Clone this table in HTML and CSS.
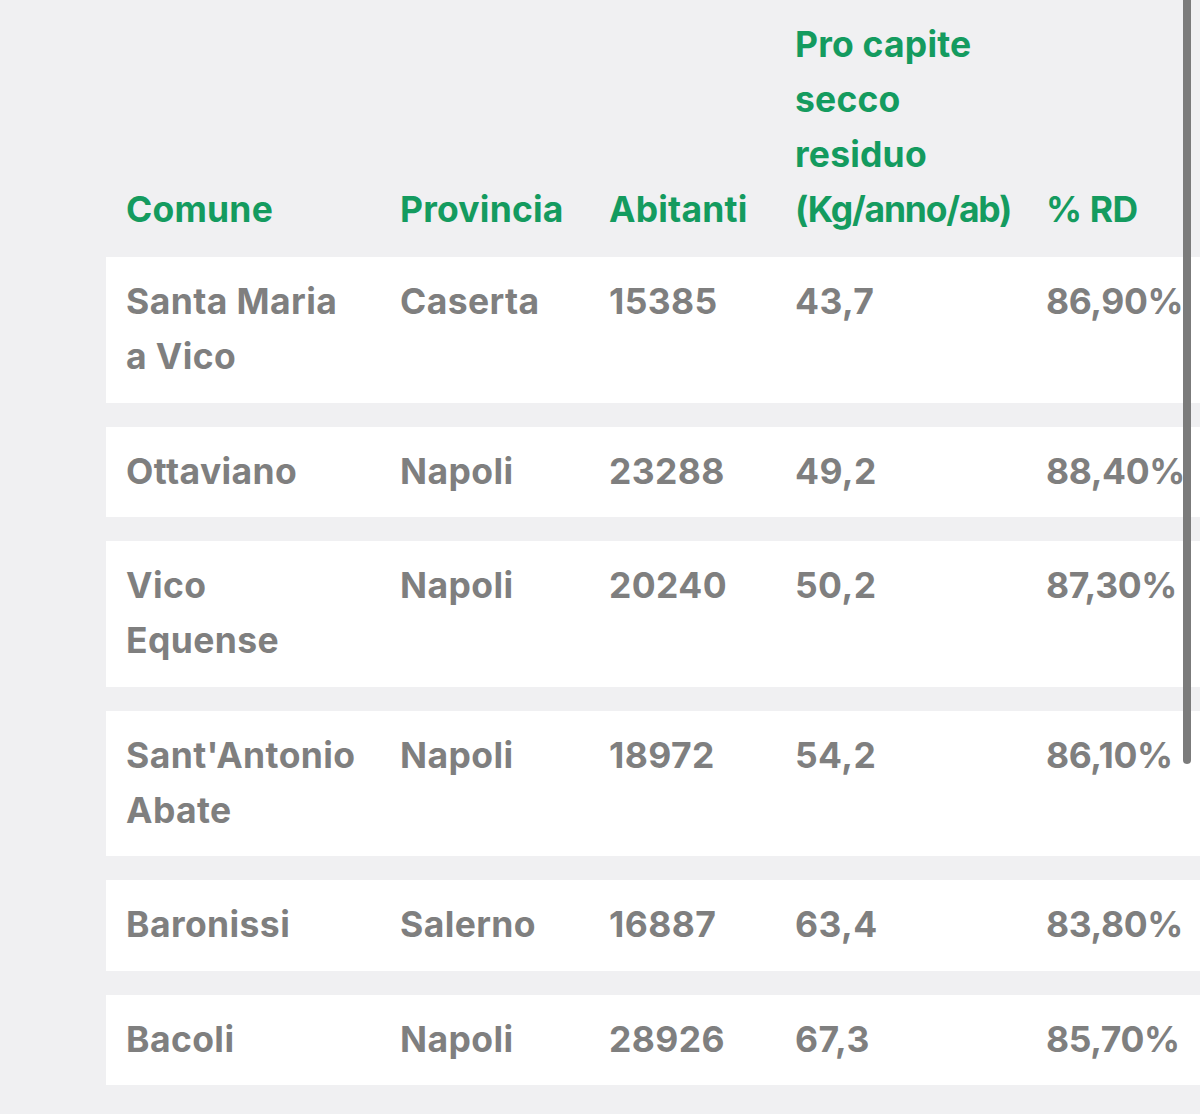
FILE: index.html
```html
<!DOCTYPE html>
<html lang="it">
<head>
<meta charset="utf-8">
<title>Comuni ricicloni</title>
<link rel="stylesheet" href="styles.css">
</head>
<body>
<div class="table">
  <div class="row head">
    <div class="cell">Comune</div>
    <div class="cell">Provincia</div>
    <div class="cell">Abitanti</div>
    <div class="cell">Pro capite<br>secco<br>residuo<br><span class="unit">(Kg/anno/ab)</span></div>
    <div class="cell">% RD</div>
  </div>
  <div class="rows">
    <div class="row">
      <div class="cell">Santa Maria<br>a Vico</div>
      <div class="cell">Caserta</div>
      <div class="cell">15385</div>
      <div class="cell">43,7</div>
      <div class="cell">86,90%</div>
    </div>
    <div class="row">
      <div class="cell">Ottaviano</div>
      <div class="cell">Napoli</div>
      <div class="cell">23288</div>
      <div class="cell">49,2</div>
      <div class="cell">88,40%</div>
    </div>
    <div class="row">
      <div class="cell">Vico<br>Equense</div>
      <div class="cell">Napoli</div>
      <div class="cell">20240</div>
      <div class="cell">50,2</div>
      <div class="cell">87,30%</div>
    </div>
    <div class="row">
      <div class="cell">Sant'Antonio<br>Abate</div>
      <div class="cell">Napoli</div>
      <div class="cell">18972</div>
      <div class="cell">54,2</div>
      <div class="cell">86,10%</div>
    </div>
    <div class="row">
      <div class="cell">Baronissi</div>
      <div class="cell">Salerno</div>
      <div class="cell">16887</div>
      <div class="cell">63,4</div>
      <div class="cell">83,80%</div>
    </div>
    <div class="row">
      <div class="cell">Bacoli</div>
      <div class="cell">Napoli</div>
      <div class="cell">28926</div>
      <div class="cell">67,3</div>
      <div class="cell">85,70%</div>
    </div>
  </div>
</div>
<div class="scrollbar"></div>
</body>
</html>
```

FILE: styles.css
```css
html, body {
  margin: 0;
  padding: 0;
  overflow: hidden;
}

body {
  background: #f0f0f2;
  font-family: "Inter", "Noto Sans", "Liberation Sans", sans-serif;
  font-weight: 700;
  font-size: 35.5px;
  line-height: 55px;
  letter-spacing: 0.4px;
  color: #7f7f7f;
  width: 1200px;
  height: 1114px;
  position: relative;
}

.table {
  margin-left: 106px;
  width: 1140px;
  display: flex;
  flex-direction: column;
}

.row {
  display: grid;
  grid-template-columns: 274px 209px 186px 251px 220px;
  background: #ffffff;
  padding: 17px 0 18.5px;
  align-items: start;
}

.row.head {
  background: transparent;
  color: #149b5f;
  padding: 17px 0 20px;
  align-items: end;
  letter-spacing: 0.2px;
}

.unit {
  letter-spacing: -1.2px;
}

.cell {
  padding-left: 20px;
  white-space: nowrap;
}

.row .cell:last-child {
  letter-spacing: -0.4px;
}

.rows {
  display: flex;
  flex-direction: column;
  gap: 24px;
}

.scrollbar {
  position: absolute;
  top: 0;
  left: 1183px;
  width: 8px;
  height: 764px;
  background: #7b7b7b;
  border-radius: 0 0 4px 4px;
}
```
